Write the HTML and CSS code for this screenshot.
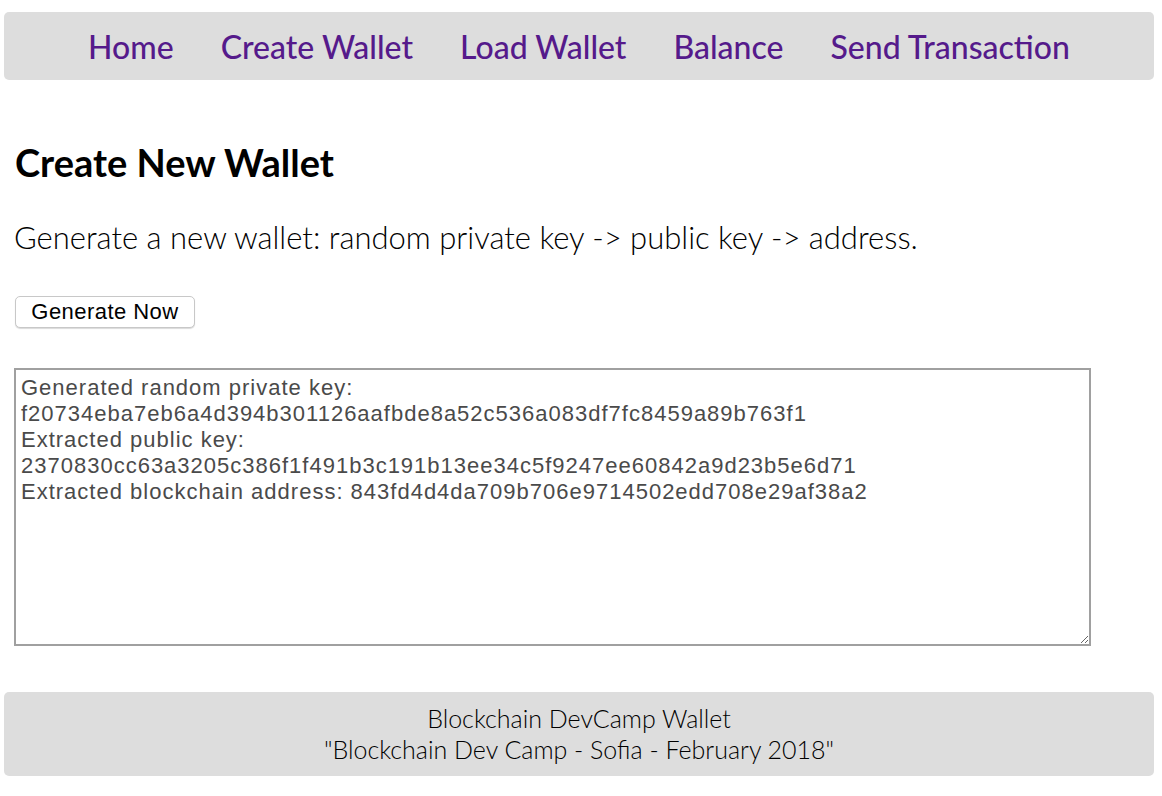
FILE: index.html
```html
<!DOCTYPE html>
<html>
<head>
<meta charset="utf-8">
<link rel="stylesheet" href="styles.css">
</head>
<body>
<header class="nav">
  <a href="#">Home</a>
  <a href="#">Create Wallet</a>
  <a href="#">Load Wallet</a>
  <a href="#">Balance</a>
  <a href="#">Send Transaction</a>
</header>
<main class="content">
  <h1>Create New Wallet</h1>
  <p class="lead">Generate a new wallet: random private key -&gt; public key -&gt; address.</p>
  <button class="btn">Generate Now</button>
  <textarea class="output">Generated random private key:
f20734eba7eb6a4d394b301126aafbde8a52c536a083df7fc8459a89b763f1
Extracted public key:
2370830cc63a3205c386f1f491b3c191b13ee34c5f9247ee60842a9d23b5e6d71
Extracted blockchain address: 843fd4d4da709b706e9714502edd708e29af38a2</textarea>
</main>
<footer class="footer">
  <div>Blockchain DevCamp Wallet</div>
  <div>"Blockchain Dev Camp - Sofia - February 2018"</div>
</footer>
</body>
</html>
```
FILE: styles.css
```css
html, body { margin: 0; padding: 0; background: #fff; }
body {
  font-family: Lato, "Liberation Sans", sans-serif;
  padding: 12px 8px 0 4px;
}
.nav {
  background: #ddd;
  border-radius: 5px;
  height: 68px;
  display: flex;
  justify-content: center;
  align-items: center;
  gap: 47px;
}
.nav a {
  color: #551a8b;
  text-decoration: none;
  font-size: 32px;
  font-weight: 500;
}
.content {
  padding: 0 10px 0 10px;
}
h1 {
  font-size: 38px;
  font-weight: 700;
  margin: 60px 0 0 1px;
  line-height: 44px;
}
.lead {
  font-size: 31px;
  font-weight: 300;
  margin: 35px 0 0 0;
  line-height: 36px;
}
.btn {
  display: block;
  margin: 41px 0 0 1px;
  font-family: "Liberation Sans", Arial, sans-serif;
  font-size: 22px;
  letter-spacing: 0.45px;
  background: #fff;
  border: 1px solid #c8c8c8;
  border-radius: 5px;
  height: 32px;
  width: 180px;
  padding: 0;
  color: #000;
  box-shadow: 0 1px 1px rgba(0,0,0,0.15);
}
.output {
  display: block;
  margin: 40px 0 0 0;
  width: 1077px;
  height: 278px;
  box-sizing: border-box;
  border: 2px solid #a0a0a0;
  padding: 5px 5px;
  font-family: "Liberation Sans", Arial, sans-serif;
  font-size: 22px;
  letter-spacing: 1px;
  line-height: 26px;
  color: #4a4a4a;
  resize: both;
}
.footer {
  margin-top: 46px;
  background: #ddd;
  border-radius: 5px;
  height: 84px;
  display: flex;
  flex-direction: column;
  justify-content: center;
  align-items: center;
  font-size: 25px;
  font-weight: 300;
  line-height: 31px;
  color: #000;
}
```
